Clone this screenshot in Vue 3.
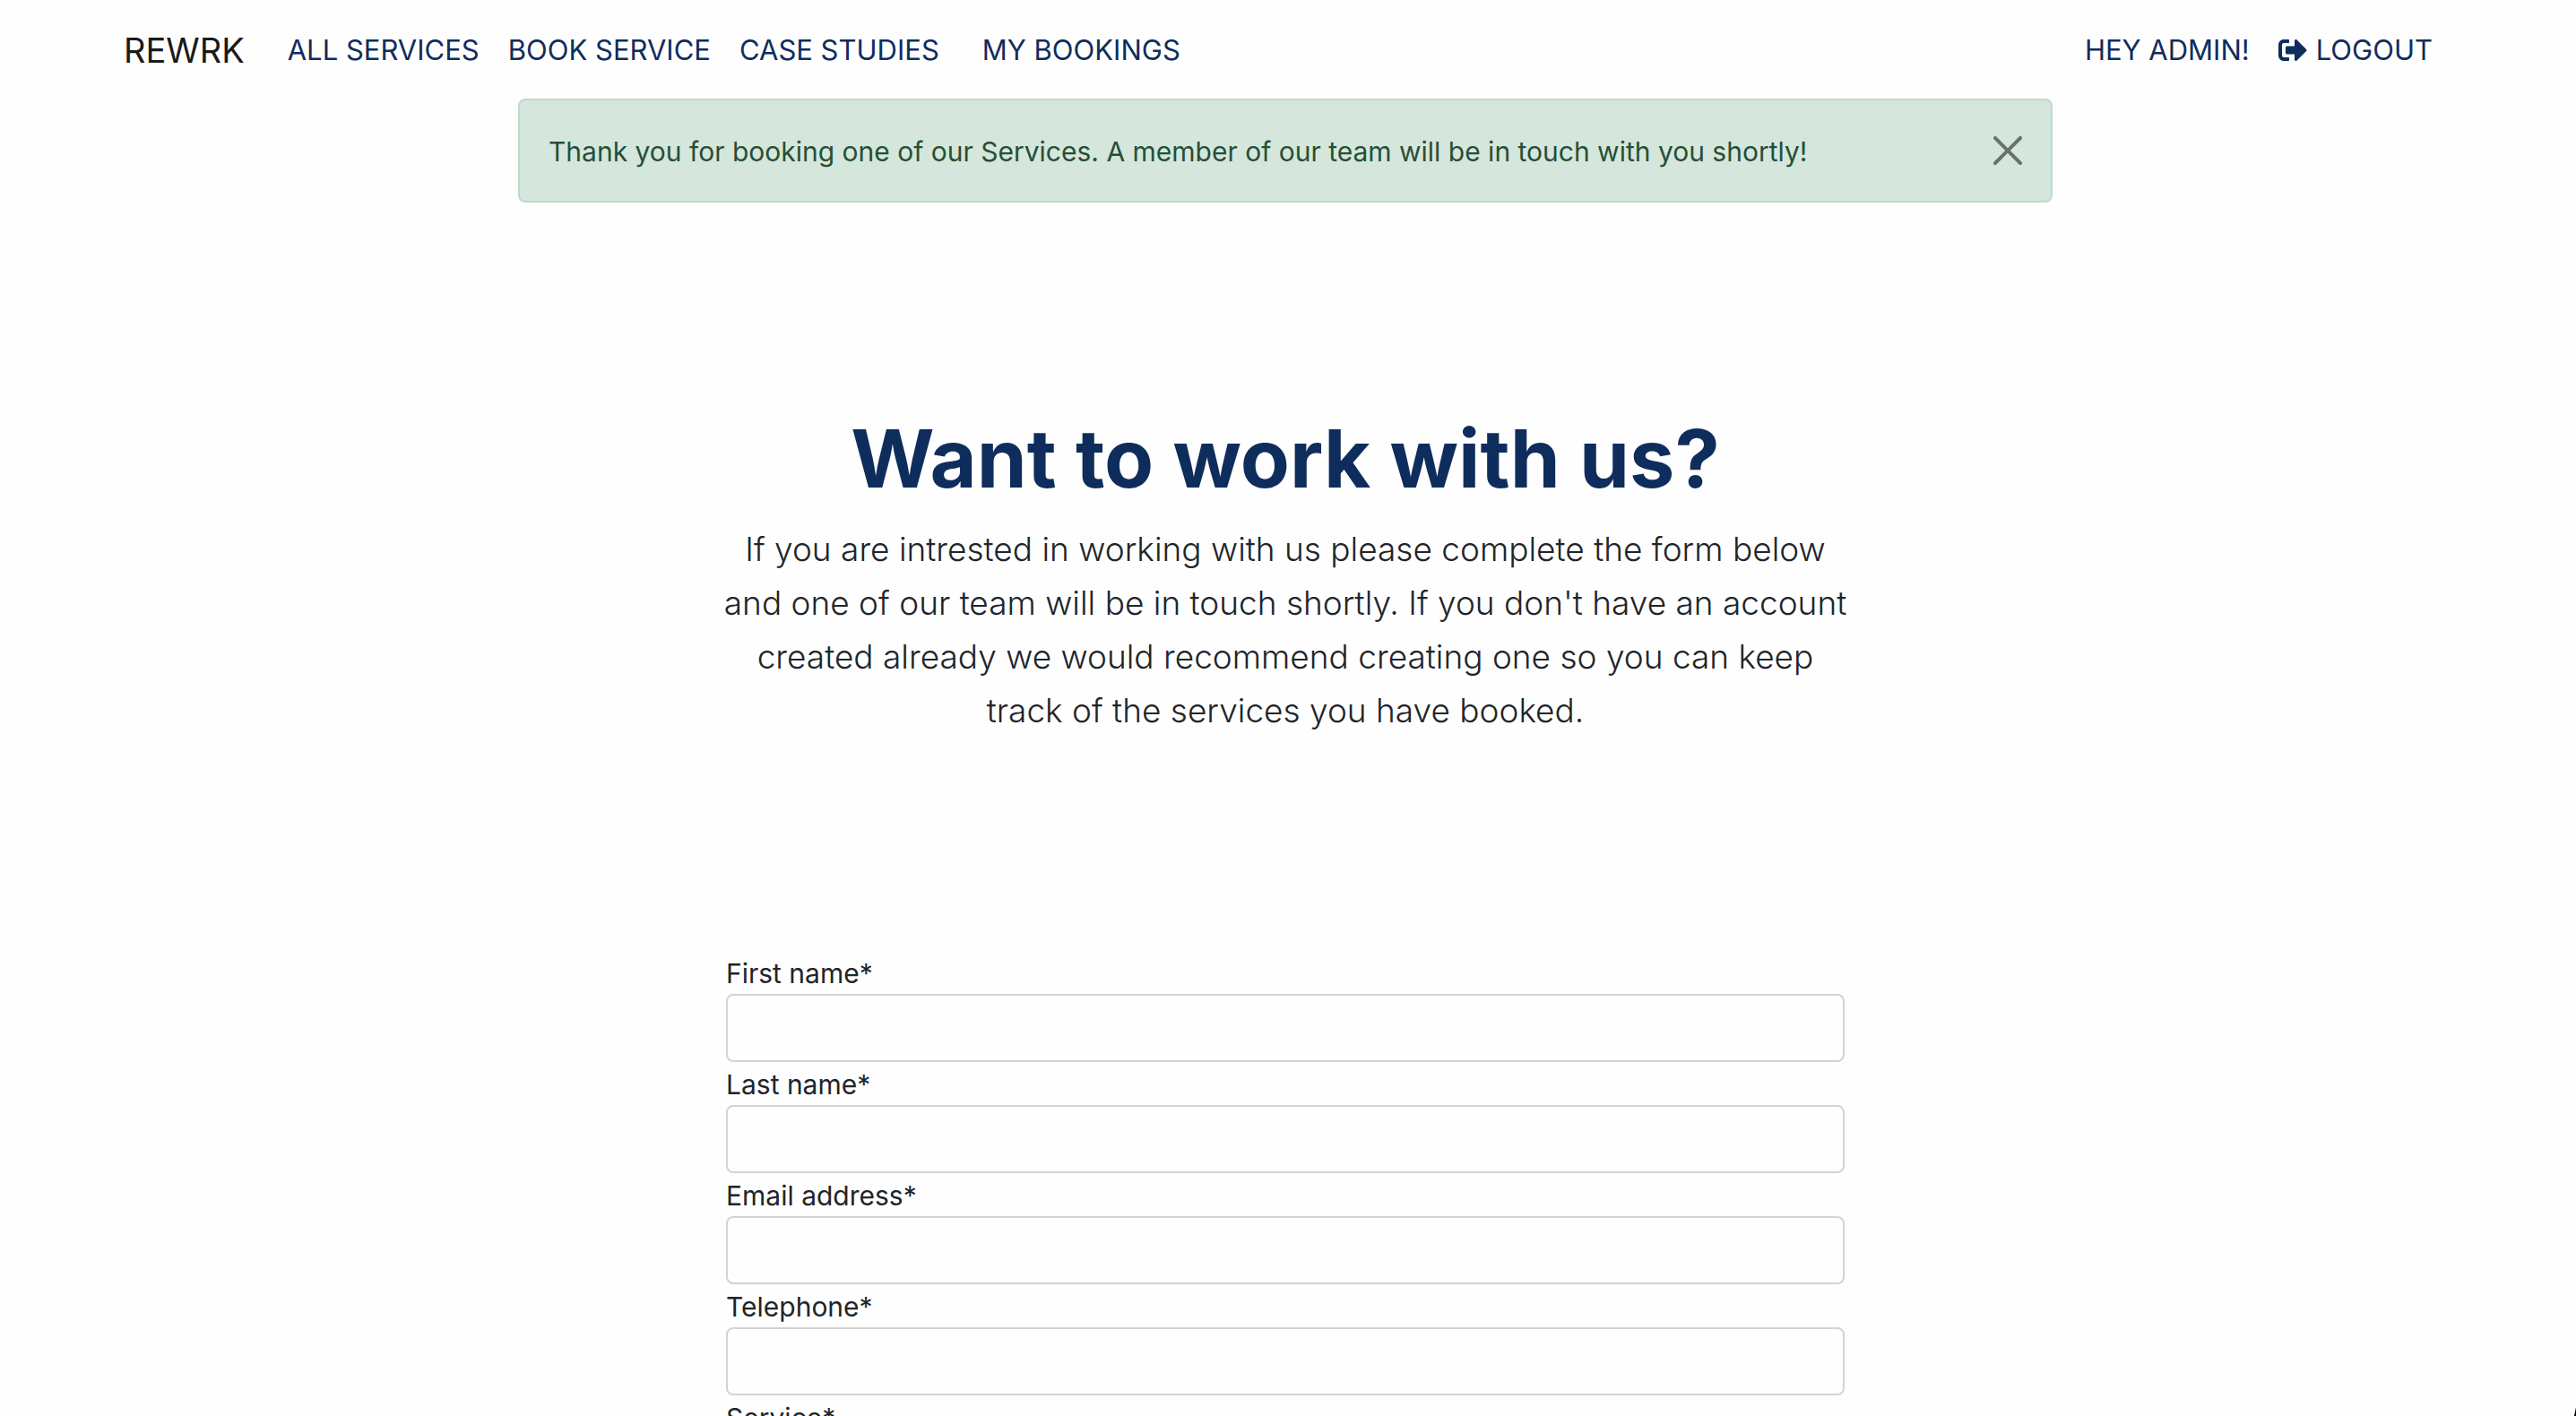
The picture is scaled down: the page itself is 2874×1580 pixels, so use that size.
<script setup>
import { ref } from 'vue'

const showAlert = ref(true)

const fields = [
  { id: 'first-name', label: 'First name*', type: 'text' },
  { id: 'last-name', label: 'Last name*', type: 'text' },
  { id: 'email', label: 'Email address*', type: 'email' },
  { id: 'telephone', label: 'Telephone*', type: 'tel' }
]
</script>

<template>
  <div class="page">
    <header>
      <nav class="container navbar" aria-label="Main">
        <a class="brand" href="#">REWRK</a>
        <a class="nav-link" href="#services">ALL SERVICES</a>
        <a class="nav-link" href="#book">BOOK SERVICE</a>
        <a class="nav-link" href="#cases">CASE STUDIES</a>
        <a class="nav-link bookings" href="#bookings">MY BOOKINGS</a>
        <div class="account">
          <a class="nav-link" href="#profile">HEY ADMIN!</a>
          <a class="nav-link logout" href="#logout">
            <svg class="logout-icon" viewBox="0 0 512 512" aria-hidden="true">
              <path fill="currentColor" d="M497 273L329 441c-15 15-41 4.5-41-17v-96H152c-13.3 0-24-10.7-24-24v-96c0-13.3 10.7-24 24-24h136V88c0-21.4 25.9-32 41-17l168 168c9.3 9.4 9.3 24.6 0 34zM192 436v-40c0-6.6-5.4-12-12-12H96c-17.7 0-32-14.3-32-32V160c0-17.7 14.3-32 32-32h84c6.6 0 12-5.4 12-12V76c0-6.6-5.4-12-12-12H96c-53 0-96 43-96 96v192c0 53 43 96 96 96h84c6.6 0 12-5.4 12-12z" />
            </svg>
            LOGOUT
          </a>
        </div>
      </nav>
    </header>

    <div v-if="showAlert" class="alert" role="alert">
      <span class="message">Thank you for booking one of our Services. A member of our team will be in touch with you shortly!</span>
      <button class="close" type="button" aria-label="Close" @click="showAlert = false">
        <svg viewBox="0 0 16 16" aria-hidden="true">
          <path d="M.293.293a1 1 0 011.414 0L8 6.586 14.293.293a1 1 0 111.414 1.414L9.414 8l6.293 6.293a1 1 0 01-1.414 1.414L8 9.414l-6.293 6.293a1 1 0 01-1.414-1.414L6.586 8 .293 1.707a1 1 0 010-1.414z" />
        </svg>
      </button>
    </div>

    <main>
      <section class="intro">
        <h1>Want to work with us?</h1>
        <p>
          If you are intrested in working with us please complete the form below<br>
          and one of our team will be in touch shortly. If you don't have an account<br>
          created already we would recommend creating one so you can keep<br>
          track of the services you have booked.
        </p>
      </section>

      <form class="form" @submit.prevent>
        <div v-for="field in fields" :key="field.id" class="field">
          <label :for="field.id">{{ field.label }}</label>
          <input :id="field.id" :type="field.type" :name="field.id" required>
        </div>
        <div class="field">
          <label for="service">Service*</label>
          <select id="service" name="service" required></select>
        </div>
      </form>
    </main>

    <svg class="pointer" viewBox="0 0 2 10" aria-hidden="true">
      <path d="M2 0V10H0Z" />
    </svg>
  </div>
</template>

<style>
body {
  margin: 0;
  background: #fefefe;
}
</style>

<style scoped>
.page {
  position: relative;
  box-sizing: border-box;
  height: 100vh;
  padding-right: 6px;
  overflow: hidden;
  color: #212529;
  font-family: Inter, "Liberation Sans", sans-serif;
  font-size: 30px;
  line-height: 48px;
}

.container {
  box-sizing: border-box;
  max-width: 2640px;
  margin: 0 auto;
  padding: 0 24px;
}

.navbar {
  display: flex;
  align-items: center;
  height: 110px;
  padding-top: 2px;
}

.brand {
  margin-right: 32px;
  color: #1a1a1a;
  font-size: 38px;
  text-decoration: none;
}

.nav-link {
  padding: 0 16px;
  color: #0f2d5c;
  font-size: 31px;
  text-decoration: none;
  white-space: nowrap;
}

.bookings {
  margin-left: 16px;
}

.account {
  display: flex;
  margin-left: auto;
}

.logout {
  display: flex;
  align-items: center;
  gap: 10px;
}

.logout-icon {
  width: 32px;
  height: 32px;
}

.alert {
  box-sizing: border-box;
  display: flex;
  align-items: center;
  justify-content: space-between;
  max-width: 1712px;
  margin: 0 auto;
  padding: 32px;
  border: 2px solid #bfd9cb;
  border-radius: 8px;
  background: #d5e6dd;
  color: #255035;
}

.message {
  padding-top: 2px;
  line-height: 46px;
}

.close {
  flex: none;
  width: 32px;
  height: 32px;
  padding: 0;
  border: 0;
  background: none;
  opacity: 0.5;
  cursor: pointer;
}

.close svg {
  display: block;
  width: 32px;
  height: 32px;
}

.intro {
  max-width: 1296px;
  margin: 0 auto;
  padding-top: 228px;
  text-align: center;
}

h1 {
  margin: 0 0 14px;
  color: #0f2d5c;
  font-size: 90px;
  font-weight: 700;
  line-height: 115px;
}

.intro p {
  margin: 0;
  font-size: 37px;
  font-weight: 300;
  line-height: 60px;
  white-space: nowrap;
}

.form {
  max-width: 1248px;
  margin: 238px auto 0;
}

.field label {
  display: block;
  padding-top: 2px;
  line-height: 46px;
}

.field input,
.field select {
  box-sizing: border-box;
  display: block;
  width: 100%;
  height: 76px;
  padding: 12px 24px;
  border: 2px solid #ced4da;
  border-radius: 8px;
  background: #fefefe;
  color: inherit;
  font: inherit;
}

.pointer {
  position: absolute;
  right: 0;
  bottom: 0;
  width: 2px;
  height: 10px;
}
</style>
